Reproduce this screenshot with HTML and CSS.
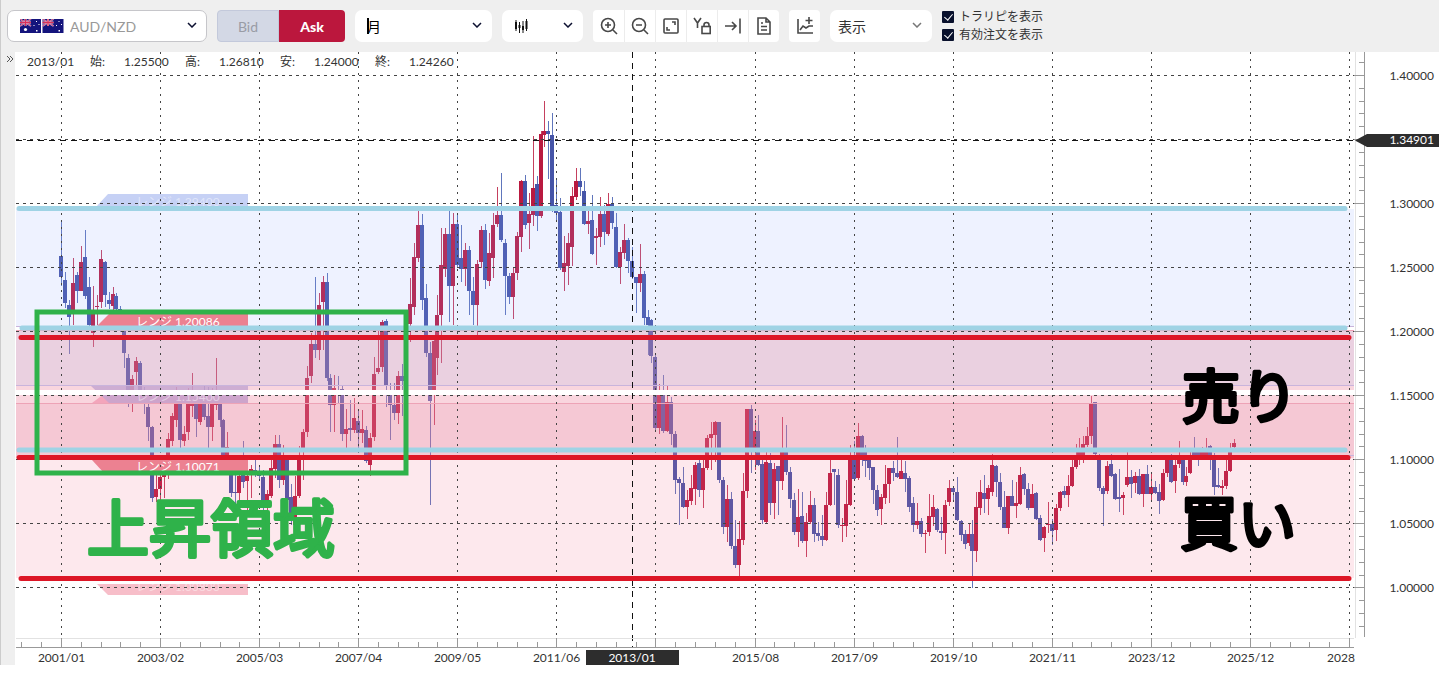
FILE: index.html
```html
<!DOCTYPE html>
<html lang="ja">
<head>
  <meta charset="UTF-8" />
  <meta name="viewport" content="width=device-width, initial-scale=1.0" />
  <title>AUD/NZD チャート</title>
  <link rel="stylesheet" href="styles.css">
</head>
<body>
  <header class="toolbar">
    <div class="field symbol">
      <svg class="flags" viewBox="0 0 44 14">
        <defs>
          <g id="flag">
            <rect width="21" height="14" fill="#14147c" />
            <path d="M0 0L11 7M11 0L0 7" stroke="#c9b6dc" stroke-width="1.600" />
            <path d="M0 0L11 7M11 0L0 7" stroke="#d8305a" stroke-width="0.800" />
            <path d="M5.500 0V7M0 3.500H11" stroke="#f0d0dc" stroke-width="2" />
            <path d="M5.500 0V7M0 3.500H11" stroke="#d8305a" stroke-width="1.300" />
            <path d="M16 2h1v1h-1zM13.500 6h1v1h-1zM18.500 5h1v1h-1zM16 11h1.500v1.500h-1.500z" fill="#fff" />
          </g>
        </defs>
        <use href="#flag" />
        <circle cx="5.500" cy="10.500" r="1.600" fill="#fff" />
        <use href="#flag" x="22.500" />
      </svg>
      <select aria-label="通貨ペア"><option>AUD/NZD</option></select>
      <svg class="chevron" viewBox="0 0 10 6"><path d="M1 1l4 4 4-4" /></svg>
    </div>

    <div class="side">
      <button class="bid" type="button">Bid</button>
      <button class="ask" type="button">Ask</button>
    </div>

    <div class="field period">
      <select aria-label="足種"><option>月</option></select>
      <svg class="chevron" viewBox="0 0 10 6"><path d="M1 1l4 4 4-4" /></svg>
    </div>

    <div class="field style">
      <svg class="candle-icon" viewBox="0 0 14 16">
        <path d="M2 2v11M5.500 4v11M9 3v12M12.500 1v12" stroke-width="1" />
        <path d="M2 4v7M5.500 7v3M9 8v4M12.500 3v8" stroke-width="2" />
      </svg>
      <select aria-label="チャート種類"><option></option></select>
      <svg class="chevron" viewBox="0 0 10 6"><path d="M1 1l4 4 4-4" /></svg>
    </div>

    <div class="tools">
      <button type="button" aria-label="拡大"><svg viewBox="0 0 18 18"><circle cx="8" cy="8" r="6.500" /><path d="M13 13l4 4M5 8h6M8 5v6" /></svg></button>
      <button type="button" aria-label="縮小"><svg viewBox="0 0 18 18"><circle cx="8" cy="8" r="6.500" /><path d="M13 13l4 4M5 8h6" /></svg></button>
      <button type="button" aria-label="全体表示"><svg viewBox="0 0 18 18"><rect x="2" y="2" width="14" height="14" rx="1" /><path d="M10 5h3v3M8 13H5v-3" /></svg></button>
      <button type="button" aria-label="Y軸固定"><svg viewBox="0 0 18 18"><path d="M1 1l3.500 5L8 1M4.500 6v5M11 9.500V8a2.500 2.500 0 0 1 5 0v1.500" /><rect x="9" y="9.500" width="8.200" height="7" /></svg></button>
      <button type="button" aria-label="最新へ"><svg viewBox="0 0 18 18"><path d="M1 9h11M8 5l4 4-4 4M16 1.500v15" /></svg></button>
      <button type="button" aria-label="メモ"><svg viewBox="0 0 18 18"><path d="M3 1h8l4 4v12H3zM11 1v4h4M6 6h2M6 9.500h6M6 13h6" /></svg></button>
    </div>

    <div class="tools">
      <button type="button" aria-label="指標を追加"><svg viewBox="0 0 18 18"><path d="M2 2v14h15M4 13l3-4 3 2 3-2h4M13 0v7M9.500 3.500h7" /></svg></button>
    </div>

    <div class="field display">
      <select aria-label="表示"><option>表示</option></select>
      <svg class="chevron" viewBox="0 0 10 6"><path d="M1 1l4 4 4-4" /></svg>
    </div>

    <div class="checks">
      <label><input type="checkbox" checked>トラリピを表示</label>
      <label><input type="checkbox" checked>有効注文を表示</label>
    </div>
  </header>

  <main class="main">
    <button class="handle" type="button" aria-label="パネルを開く">
      <svg viewBox="0 0 8 8"><path d="M1 1l3 3-3 3M4 1l3 3-3 3" /></svg>
    </button>

    <section class="chart">
      <div class="ohlc">
        <span class="date">2013/01</span>
        <span class="key">始:</span><span class="val">1.25500</span>
        <span class="key">高:</span><span class="val">1.26810</span>
        <span class="key">安:</span><span class="val">1.24000</span>
        <span class="key">終:</span><span class="val">1.24260</span>
      </div>

      <svg class="plot" viewBox="15 52 1424 626">
        <g id="candles"></g>

        <!-- レンジ帯 -->
        <rect class="band-blue" x="16" y="209" width="1338" height="117" />
        <rect class="band-purple" x="16" y="330" width="1338" height="56" />
        <rect class="band-rose" x="16" y="386" width="1338" height="17" />
        <rect class="band-pink" x="16" y="403" width="1338" height="55" />
        <rect class="band-light" x="16" y="458" width="1338" height="120" />
        <path class="edge-rose" d="M16 330.500H1354M16 403.500H1354" />
        <path class="edge-blue" d="M16 385.500H1354M16 326.500H1354M1340 455.500H1354" />

        <!-- レンジのラベル -->
        <g class="range">
          <path fill="#c6d1f5" d="M108 194H248V207H96z" />
          <text class="faint" x="136" y="206">レンジ 1.29400</text>
          <path fill="#ec8191" d="M109 314H248V326H97z" />
          <text x="136" y="326">レンジ 1.20086</text>
          <path fill="#f3a5bb" d="M92 403L104 394H248V403z" />
          <path fill="#c3a4d0" opacity="0.800" d="M91 386H248V403H109z" />
          <text class="faint" x="136" y="401">レンジ 1.15400</text>
          <path fill="#ec8191" d="M92 460H248V473H104z" />
          <text x="136" y="471">レンジ 1.10071</text>
          <path fill="#f7bec9" d="M97 584H248V595H108z" />
          <text class="faint" x="136" y="591">レンジ 1.00800</text>
        </g>
        <rect x="16" y="390" width="1338" height="5" fill="#fff" />

        <g id="grid"></g>

        <path class="cross" d="M16 140.500H1356" />
        <path class="cross" d="M632.500 52V647" />

        <!-- 手書きの線 -->
        <path class="line-blue" d="M19 208.500H1345M22 328H1345M19 450H1345" />
        <path class="line-red" d="M21 337.500H1349M19 457.500H1348M21 578.500H1349" />
        <rect class="zone" x="37" y="312" width="369" height="161" />
        <text class="note green" x="87" y="552">上昇領域</text>
        <text class="note black" x="1182" y="418">売り</text>
        <text class="note black" x="1180" y="545">買い</text>

        <g id="axes"></g>
        <rect x="586" y="650" width="93" height="15" fill="#2d2d2d" />
        <text class="axis inv" x="632" y="662" text-anchor="middle">2013/01</text>
        <path d="M1355 140.500L1367 134H1439V147H1367z" fill="#2d2d2d" />
        <text class="axis inv" x="1434" y="144" text-anchor="end">1.34901</text>
      </svg>
    </section>
  </main>

  <script src="chart.js"></script>
</body>
</html>
```
FILE: styles.css
```css
* { box-sizing: border-box; margin: 0; padding: 0; }
body {
  background: #fff;
  color: #333;
  font-family: Lato, "Noto Sans CJK JP", sans-serif;
  font-size: 14px;
}
button, select, input {
  font: inherit;
  color: inherit;
  border: none;
}

.toolbar {
  display: flex;
  align-items: center;
  gap: 10px;
  height: 52px;
  padding: 0 8px 0 6px;
  background: #efefef;
  border-left: 1px solid #ccc;
}
.field {
  position: relative;
  height: 32px;
}
.field select {
  appearance: none;
  width: 100%;
  height: 100%;
  padding: 0 24px 0 12px;
  background: #fff;
  border-radius: 7px;
}
.chevron {
  position: absolute;
  right: 10px;
  top: 12px;
  width: 10px;
  height: 6px;
  fill: none;
  stroke: #0c1030;
  stroke-width: 1.5;
  pointer-events: none;
}
.symbol { width: 200px; }
.symbol select {
  padding-left: 62px;
  color: #999;
  border: 1px solid #c6c6ca;
}
.flags {
  position: absolute;
  left: 13px;
  top: 9px;
  width: 44px;
  height: 14px;
}
.period { width: 137px; }
.period select { color: #000; }
.period::before {
  content: "";
  position: absolute;
  left: 12px;
  top: 8px;
  width: 2px;
  height: 16px;
  background: #000;
}
.style { width: 81px; }
.candle-icon {
  position: absolute;
  left: 12px;
  top: 8px;
  width: 14px;
  height: 16px;
  stroke: #111;
}
.display { width: 102px; }
.display select { padding-left: 8px; }
.display .chevron { stroke: #777; }

.side {
  display: flex;
  width: 128px;
  height: 32px;
}
.bid {
  flex: 61;
  color: #999ca5;
  background: #d3d8e5;
  border: 1px solid #c3c9db;
  border-radius: 4px 0 0 4px;
}
.ask {
  flex: 67;
  color: #fff;
  font-weight: 900;
  background: #bb173d;
  border-radius: 0 4px 4px 0;
}

.tools {
  display: flex;
  height: 32px;
  border-radius: 4px;
  overflow: hidden;
}
.tools button {
  width: 31px;
  background: #fff;
}
.tools button + button { border-left: 1px solid #ececec; }
.tools svg {
  display: block;
  margin: 0 auto;
  width: 18px;
  height: 18px;
  fill: none;
  stroke: #484848;
  stroke-width: 1.6;
}

.checks {
  display: flex;
  flex-direction: column;
  font-size: 12px;
  line-height: 18px;
}
.checks label {
  display: flex;
  align-items: center;
  gap: 5px;
}
.checks input {
  appearance: none;
  width: 12px;
  height: 12px;
  border-radius: 1px;
  background: #08102c;
}
.checks input:checked::before {
  content: "";
  display: block;
  width: 4px;
  height: 7px;
  margin: 1px 4px;
  border: solid #fff;
  border-width: 0 1px 1px 0;
  transform: rotate(40deg);
}

.main {
  display: flex;
  align-items: flex-start;
}
.handle {
  flex: 0 0 15px;
  align-self: stretch;
  margin-bottom: 13px;
  padding: 3px 0 0 5px;
  background: #efefef;
  border-left: 1px solid #ccc;
  display: flex;
  align-items: flex-start;
}
.handle svg {
  width: 8px;
  height: 8px;
  fill: none;
  stroke: #555;
}
.chart {
  position: relative;
  flex: 1;
  min-width: 0;
}
.plot {
  display: block;
  width: 100%;
}
.ohlc {
  position: absolute;
  left: 12px;
  top: 2px;
  display: flex;
  font-size: 12px;
  line-height: 16px;
}
.ohlc .date { width: 63px; }
.ohlc .key { width: 34px; }
.ohlc .val { width: 61px; }

/* ローソク足 */
.up { fill: #b91a40; }
.down { fill: #4655a8; }
.up .wick { fill: #c5405e; }
.down .wick { fill: #6076bc; }

.band-blue { fill: #8ea8ff; opacity: 0.15; }
.band-purple { fill: #ca89b1; opacity: 0.4; }
.band-rose { fill: #f097ac; opacity: 0.4; }
.band-pink { fill: #e67593; opacity: 0.4; }
.band-light { fill: #f26687; opacity: 0.15; }
.edge-rose { stroke: #eda3b6; }
.edge-blue { stroke: #c9b4dc; }

.range text {
  fill: #fff;
  font-size: 12px;
}
.range .faint { opacity: 0.45; }

.grid-h { stroke: #444; stroke-dasharray: 3 4; }
.grid-v { stroke: #444; stroke-dasharray: 2 5; }
.cross { stroke: #111; stroke-dasharray: 6 5; }

.line-blue, .line-red {
  fill: none;
  stroke-width: 5;
  stroke-linecap: round;
}
.line-blue { stroke: #9fd3e5; }
.line-red { stroke: #dd1626; }
.zone {
  fill: none;
  stroke: #2fb24a;
  stroke-width: 5;
}
.note {
  font-family: "Noto Sans CJK JP", sans-serif;
  font-size: 62px;
  font-weight: 400;
  stroke-width: 4;
  stroke-linejoin: round;
}
.green { fill: #2fb24a; stroke: #2fb24a; }
.black { font-size: 58px; fill: #000; stroke: #000; }

.axis-line { fill: none; stroke: #999; }
.axis-soft { fill: none; stroke: #e2e2e2; }
.axis { font-size: 12px; fill: #333; }
.inv { fill: #fff; }
```
FILE: chart.js
```js
// 1本 = 方向, 高値, 実体上, 実体下, 安値
const data = `
d 222 256 277 286|d 272 280 303 308|d 300 305 317 354|u 258 283 310 325|d 272 275 291 303
u 246 262 291 291|d 230 257 296 299|d 277 287 325 328|u 286 310 333 347|u 295 306 307 325
u 250 259 302 308|d 261 262 295 307|d 292 300 304 309|u 287 294 306 310|d 293 296 309 312
d 306 309 331 332|d 331 331 353 368|d 354 358 395 407|u 375 379 395 412|u 357 361 372 386
d 361 363 395 397|d 387 390 400 414|d 402 407 427 441|d 426 427 498 502|u 475 489 497 502
u 470 477 489 501|u 455 465 477 498|u 433 439 457 479|u 413 416 441 446|u 387 395 420 427
d 395 400 440 450|u 426 434 441 446|u 388 403 432 440|u 373 390 406 417|d 390 395 419 437
u 397 403 422 425|d 385 395 417 420|d 387 416 427 448|u 388 395 427 441|u 358 390 405 410
d 390 395 420 427|d 419 420 455 460|u 432 447 460 465|d 455 470 493 497|d 475 492 493 519
u 465 476 493 515|d 441 470 482 488|u 460 476 481 515|u 465 469 471 498|d 460 470 471 477
d 466 474 476 480|d 470 477 502 510|u 490 494 505 513|u 455 468 496 498|u 435 444 469 478
d 435 444 480 488|u 445 455 480 485|d 455 457 500 510|d 484 497 520 525|u 476 496 525 535
u 446 455 496 498|u 429 432 452 480|u 366 378 432 437|u 333 344 376 383|d 277 344 350 358
u 293 305 350 360|u 276 282 302 350|d 273 282 378 381|d 374 378 405 432|u 375 388 405 432
d 376 390 395 403|d 386 389 434 441|u 409 429 434 452|d 400 428 430 441|u 398 418 430 433
d 410 421 433 451|u 410 429 433 443|d 426 430 461 463|u 433 438 465 476|u 357 374 437 441
u 331 368 372 374|u 320 322 367 372|d 319 321 386 407|d 383 395 405 440|d 383 405 413 420
u 371 376 413 424|d 364 376 381 416|u 330 345 380 390|u 278 304 324 342|u 243 257 307 315
u 210 225 258 262|d 214 225 300 310|d 284 298 353 357|d 342 353 401 505|u 335 341 390 425
u 295 315 358 375|u 228 265 315 363|u 228 234 269 277|d 211 234 286 322|u 213 224 286 325
d 214 224 265 267|d 225 258 269 282|u 243 250 269 286|d 246 250 291 315|d 277 291 305 325
u 260 264 305 335|u 226 230 262 268|d 224 230 280 289|u 233 253 281 286|u 213 225 258 278
u 187 215 224 227|d 173 215 240 242|d 239 243 276 315|d 273 276 297 304|u 267 273 297 319
u 232 236 273 280|u 180 181 237 252|d 175 181 225 229|u 193 214 223 249|u 136 188 215 226
d 176 184 216 231|u 131 134 216 218|u 101 131 135 147|d 121 131 134 179|d 113 135 210 212
d 179 205 213 220|d 198 212 268 270|u 236 263 272 291|u 233 243 266 285|u 187 196 247 266
u 168 181 197 200|d 168 181 187 196|d 181 191 224 225|u 211 221 224 234|d 195 220 254 255
u 228 236 238 265|u 197 214 237 247|d 205 214 232 245|u 193 204 234 236|d 197 204 223 229
d 213 227 267 268|u 247 252 267 284|u 224 240 253 259|d 238 240 261 273|d 247 261 277 279
d 277 277 283 313|u 244 274 283 292|d 271 274 318 325|d 310 317 325 355|d 319 320 356 363
d 353 357 428 430|u 384 395 428 434|d 375 395 431 433|u 385 402 431 432|d 397 402 434 445
d 431 434 480 494|d 477 479 483 525|d 467 483 507 508|u 490 500 507 519|u 475 488 501 505
u 462 465 489 505|d 460 463 490 497|u 455 468 490 508|u 435 438 468 470|u 422 434 438 470
u 421 422 435 462|d 422 422 480 483|d 477 480 527 534|u 485 499 527 542|d 492 499 546 549
d 520 546 565 568|u 521 539 565 576|u 473 491 540 545|u 409 409 491 498|d 405 409 450 473
u 420 431 450 470|d 415 431 465 466|d 455 464 520 524|u 450 462 522 524|d 453 463 503 515
u 463 469 503 519|d 466 466 481 515|u 417 450 481 490|d 425 450 472 475|d 467 472 499 508
d 493 500 532 535|u 489 517 532 547|d 492 516 541 543|u 513 522 541 557|u 491 505 522 524
d 498 505 534 542|d 522 533 536 541|d 515 536 540 546|u 492 505 540 541|u 459 473 505 506
d 469 469 472 505|d 469 475 525 528|u 518 525 526 542|u 480 504 526 537|u 445 455 505 506
d 441 455 479 481|u 423 436 478 480|d 435 436 455 466|d 445 452 461 477|d 455 459 468 480
d 467 467 490 504|d 485 490 510 516|u 494 497 509 525|u 465 484 498 504|u 468 468 484 503
d 461 468 473 481|d 437 473 477 478|u 457 471 479 479|d 461 473 479 492|d 476 478 507 512
d 497 503 525 532|u 503 521 525 529|d 518 521 534 537|u 530 533 534 553|u 494 516 532 536
u 495 507 517 526|d 508 509 530 532|d 517 531 533 540|u 500 505 533 554|u 480 488 502 506
d 487 488 492 500|d 477 492 520 521|d 520 521 535 541|d 530 534 544 549|u 523 534 543 546
d 520 534 551 588|u 492 507 551 562|u 480 492 508 515|d 475 493 499 513|u 485 488 499 515
u 454 465 492 496|d 465 466 482 497|d 473 482 507 510|d 491 507 528 528|u 496 496 528 534
d 480 496 506 506|u 482 503 506 518|u 467 475 504 505|d 473 474 489 495|d 483 489 508 510
u 484 494 508 508|d 492 493 519 520|d 515 518 540 541|u 526 527 538 552|u 502 524 525 533
d 519 524 531 545|u 504 508 530 541|u 491 492 508 511|d 486 491 495 498|u 475 486 495 507
u 460 467 486 487|u 444 455 467 469|u 438 450 458 465|u 436 444 455 463|u 427 436 445 447
u 396 404 436 444|d 402 402 454 455|d 454 455 488 491|d 486 488 494 526|u 461 466 491 494
d 454 464 476 477|d 473 474 499 500|d 469 497 499 512|u 492 495 498 515|u 452 477 485 487
d 470 477 484 498|u 472 476 483 493|d 469 476 494 495|u 474 474 494 507|d 465 474 494 494
u 473 487 494 502|d 481 487 493 494|d 484 492 501 514|u 469 473 500 501|u 455 458 473 477
d 454 456 482 483|u 460 465 481 493|u 441 460 464 468|d 455 459 482 485|u 467 476 482 486
u 452 457 473 474|d 437 450 458 460|d 450 452 456 466|u 447 452 455 458|u 438 448 455 456
d 445 446 456 470|d 453 456 487 495|d 468 485 487 488|u 480 486 488 495|u 460 471 486 489
u 443 450 471 472|u 439 443 447 450`;

const startX = 61.5;
const monthW = 3.963;

document.getElementById("candles").innerHTML = data.trim().split(/[|\n]/).map((row, i) => {
  const [dir, hi, top, bottom, lo] = row.split(" ");
  const x = Math.round(startX + i * monthW - 0.5);
  return `<g class="${dir === "u" ? "up" : "down"}">
    <rect class="wick" x="${x}" y="${hi}" width="1" height="${lo - hi}" />
    <rect x="${x - 2}" y="${top}" width="4" height="${Math.max(bottom - top, 1)}" />
  </g>`;
}).join("");

const dates = ["2001/01", "2003/02", "2005/03", "2007/04", "2009/05", "2011/06", "", "2015/08",
  "2017/09", "2019/10", "2021/11", "2023/12", "2025/12", "2028"];
const prices = [1.4, 1.35, 1.3, 1.25, 1.2, 1.15, 1.1, 1.05, 1.0];
const dateX = i => Math.round(startX + i * 25 * monthW - 0.5) + 0.5;
const priceY = p => Math.round(75 + (1.4 - p) * 1281) + 0.5;

let grid = "";
prices.forEach(p => { grid += `<path class="grid-h" d="M16 ${priceY(p)}H1354" />`; });
dates.forEach((d, i) => { grid += `<path class="grid-v" d="M${dateX(i)} 52V638" />`; });
document.getElementById("grid").innerHTML = grid;

// 目盛り
let ticks = "M16 647.5H1354M1364.5 52V637";
for (let i = -2; i <= 65; i++) {
  const x = dateX(i / 5);
  ticks += `M${x} ${i % 5 ? 642 : 638}V647`;
}
for (let i = -1; i <= 43; i++) {
  const y = priceY(1.4 - i / 100);
  ticks += `M${i % 5 ? 1359 : 1354} ${y}H1364`;
}
let axes = `<path class="axis-soft" d="M16 638.5H1354M1355.5 52V638" /><path class="axis-line" d="${ticks}" />`;
dates.forEach((d, i) => {
  if (d === "2028") axes += `<text class="axis" x="1327" y="662">${d}</text>`;
  else axes += `<text class="axis" x="${dateX(i)}" y="662" text-anchor="middle">${d}</text>`;
});
prices.forEach(p => {
  if (p !== 1.35) axes += `<text class="axis" x="1434" y="${priceY(p) + 4}" text-anchor="end">${p.toFixed(5)}</text>`;
});
document.getElementById("axes").innerHTML = axes;
```
